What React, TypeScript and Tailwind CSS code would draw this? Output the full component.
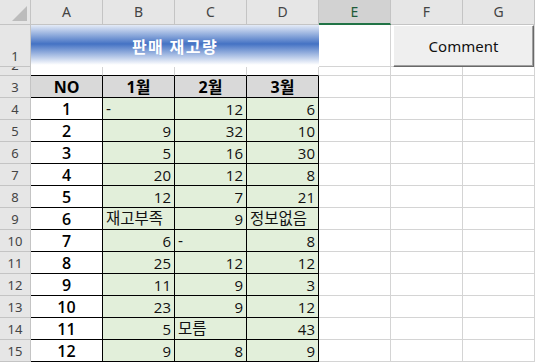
const cols = ["A", "B", "C", "D", "E", "F", "G"];

type Val = string | number;

const rows: Val[][] = [
  [1, "-", 12, 6],
  [2, 9, 32, 10],
  [3, 5, 16, 30],
  [4, 20, 12, 8],
  [5, 12, 7, 21],
  [6, "재고부족", 9, "정보없음"],
  [7, 6, "-", 8],
  [8, 25, 12, 12],
  [9, 11, 9, 3],
  [10, 23, 9, 12],
  [11, 5, "모름", 43],
  [12, 9, 8, 9],
];

function RowHead({ n, h }: { n: number; h: string }) {
  return (
    <div
      className={`${h} w-[31px] shrink-0 overflow-hidden bg-[#e6e6e6] border-r border-b border-[#c4c4c4] flex items-end justify-center pb-[1px] text-[13px] leading-[18px] text-[#444] font-['Noto_Sans',sans-serif]`}
    >
      {n}
    </div>
  );
}

function Blank({ top }: { top?: boolean }) {
  return (
    <div
      className={`w-[72px] shrink-0 h-full border-r border-[#d4d4d4] ${
        top ? "border-b border-b-black" : "border-b"
      }`}
    />
  );
}

function DataCell({ v }: { v: Val }) {
  const isNum = typeof v === "number";
  return (
    <div
      className={`w-[72px] shrink-0 h-full bg-[#e2efda] border-r border-b border-black flex items-center px-[3px] pt-[1px] text-[#111] ${
        isNum ? "justify-end text-[15px]" : "justify-start text-[15.5px]"
      }`}
    >
      {v}
    </div>
  );
}

export default function App() {
  return (
    <div className="relative w-[535px] h-[363px] bg-white overflow-hidden font-['Open_Sans','Noto_Sans_CJK_KR',sans-serif] leading-none">
      {/* column headers */}
      <div className="flex h-[25px]">
        <div className="w-[31px] shrink-0 bg-[#e6e6e6] border-r border-b border-[#c4c4c4] flex items-end justify-end p-[3px]">
          <svg width="15" height="15" viewBox="0 0 15 15">
            <polygon points="15,0 15,15 0,15" fill="#bcbcbc" />
          </svg>
        </div>
        {cols.map((c) =>
          c === "E" ? (
            <div
              key={c}
              className="w-[72px] shrink-0 bg-[#d2d2d2] border-r border-[#c4c4c4] border-b-2 border-b-[#217346] flex items-center justify-center text-[14px] text-[#1e5b3a] font-['Noto_Sans',sans-serif]"
            >
              {c}
            </div>
          ) : (
            <div
              key={c}
              className="w-[72px] shrink-0 bg-[#e6e6e6] border-r border-b border-[#c4c4c4] flex items-center justify-center text-[14px] text-[#444] font-['Noto_Sans',sans-serif]"
            >
              {c}
            </div>
          )
        )}
      </div>

      {/* row 1: title */}
      <div className="flex h-[42px]">
        <RowHead n={1} h="h-[42px]" />
        <div className="w-[288px] shrink-0 h-full bg-[linear-gradient(to_bottom,#e4ebf7_0%,#4472c4_45%,#ffffff_95%)] flex items-center justify-center text-white font-bold text-[16px] tracking-[1.5px] font-['Noto_Sans_CJK_KR',sans-serif]">
          판매 재고량
        </div>
        <Blank />
        <Blank />
        <Blank />
      </div>

      {/* row 2 */}
      <div className="flex h-[9px]">
        <RowHead n={2} h="h-[9px]" />
        <Blank top />
        <Blank top />
        <Blank top />
        <Blank top />
        <Blank />
        <Blank />
        <Blank />
      </div>

      {/* row 3: table header */}
      <div className="flex h-[22px]">
        <RowHead n={3} h="h-[22px]" />
        {["NO", "1월", "2월", "3월"].map((t) => (
          <div
            key={t}
            className="w-[72px] shrink-0 h-full bg-[#d9d9d9] border-r border-b border-black flex items-center justify-center pt-[1px] font-bold text-[16px] text-black"
          >
            {t}
          </div>
        ))}
        <Blank />
        <Blank />
        <Blank />
      </div>

      {/* rows 4-15 */}
      {rows.map((r, i) => (
        <div key={i} className="flex h-[22px]">
          <RowHead n={i + 4} h="h-[22px]" />
          <div className="w-[72px] shrink-0 h-full bg-white border-r border-b border-black flex items-center justify-center pt-[1px] font-semibold text-[16px] text-black">
            {r[0]}
          </div>
          <DataCell v={r[1]} />
          <DataCell v={r[2]} />
          <DataCell v={r[3]} />
          <Blank />
          <Blank />
          <Blank />
        </div>
      ))}

      {/* Comment button over F1:G1 */}
      <button className="absolute left-[393px] top-[25px] w-[141px] h-[42px] bg-[#efefef] border border-t-white border-l-white border-r-[#696969] border-b-[#696969] shadow-[inset_-1px_-1px_0_#a0a0a0] flex items-center justify-center text-[15px] text-[#111] font-['Noto_Sans',sans-serif]">
        Comment
      </button>
    </div>
  );
}
